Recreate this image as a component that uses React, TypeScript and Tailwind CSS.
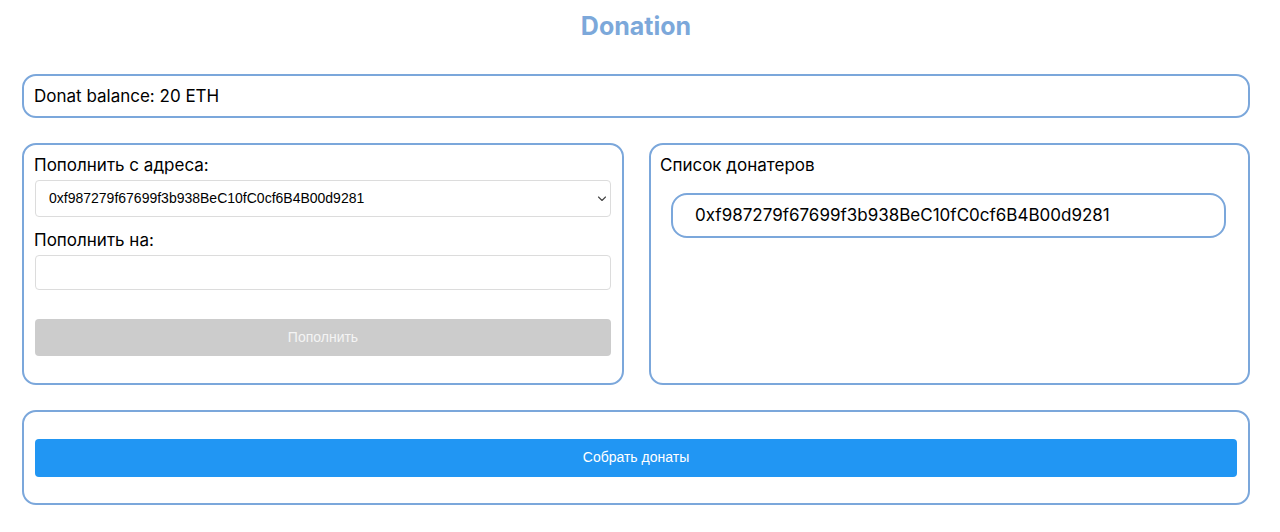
export default function App() {
  const addr = "0xf987279f67699f3b938BeC10fC0cf6B4B00d9281";
  return (
    <div className="min-h-[532px] bg-white font-['Inter','Noto_Sans',sans-serif] text-black">
      <div className="ml-[22px] w-[1228px]">
        <h1 className="pt-[10px] text-center text-[25px] font-bold leading-[32px] text-[#7ca8da]">Donation</h1>

        <div className="mt-[32px] flex h-[44px] items-center rounded-[14px] border-2 border-[#7ba7db] px-[10px] pt-[2px] text-[17px]">
          Donat balance: 20 ETH
        </div>

        <div className="mt-[25px] grid grid-cols-[602px_601px] gap-[25px]">
          <div className="flex h-[242px] flex-col rounded-[14px] border-2 border-[#7ba7db] px-[11px] pt-[9px]">
            <label className="block text-[17px] leading-[22px] -ml-px">Пополнить с адреса:</label>
            <div className="relative mt-[4px]">
              <select className="h-[37px] w-full appearance-none rounded-[4px] border border-[#dcdcdc] bg-white pl-[13px] font-['Liberation_Sans',Arial,sans-serif] text-[14px] text-black outline-none">
                <option>{addr}</option>
              </select>
              <svg className="pointer-events-none absolute right-[4px] top-[15px]" width="10" height="8" viewBox="0 0 10 8" fill="none">
                <path d="M1.5 2 L5 5.5 L8.5 2" stroke="#444" strokeWidth="1.1" strokeLinecap="round" strokeLinejoin="round" />
              </svg>
            </div>
            <label className="mt-[12px] block text-[17px] leading-[22px] -ml-px">Пополнить на:</label>
            <input className="mt-[4px] h-[35px] w-full rounded-[4px] border border-[#dcdcdc] bg-white outline-none" />
            <button className="mt-[29px] h-[37px] w-full rounded-[4px] bg-[#cccccc] font-['Liberation_Sans',Arial,sans-serif] text-[14px] text-[#f4f4f4]">
              Пополнить
            </button>
          </div>

          <div className="flex h-[242px] flex-col rounded-[14px] border-2 border-[#7ba7db] pl-[9px] pt-[9px] pr-[22px]">
            <div className="text-[17px] leading-[22px]">Список донатеров</div>
            <div className="ml-[11px] mt-[17px] flex h-[45px] items-center rounded-[16px] border-2 border-[#7ba7db] pl-[22px] text-[17px]">
              {addr}
            </div>
          </div>
        </div>

        <div className="mt-[25px] flex h-[95px] flex-col justify-center rounded-[14px] border-2 border-[#7ba7db] px-[11px]">
          <button className="h-[38px] w-full rounded-[4px] bg-[#2196f3] font-['Liberation_Sans',Arial,sans-serif] text-[14px] text-white">
            Собрать донаты
          </button>
        </div>
      </div>
    </div>
  );
}
